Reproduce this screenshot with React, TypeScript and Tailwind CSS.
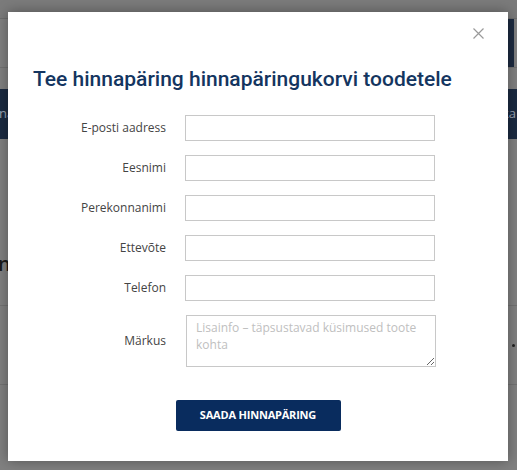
import React from "react";

const fields = ["E-posti aadress", "Eesnimi", "Perekonnanimi", "Ettevõte", "Telefon"];

export default function App() {
  return (
    <div
      className="relative w-[517px] h-[470px] overflow-hidden bg-[#808080]"
      style={{ fontFamily: '"Open Sans", "Noto Sans", sans-serif' }}
    >
      {/* background page (dimmed) */}
      <div className="flex flex-col">
        <div className="h-[19px] bg-[#7b7b7b] border-b border-[#6e6e6e]" />
        <div className="h-[49px] flex justify-end border-b border-[#727272]">
          <div className="w-[6px] mr-[3px] bg-[#1c2a40]" />
        </div>
        <div className="h-[21px]" />
        <div className="h-[50px] bg-[#1b2a41] flex items-center justify-between text-[#9aa4b3] text-[13px]">
          <span className="-ml-[1px]">na</span>
          <span className="mr-[1px]">ka</span>
        </div>
        <div className="h-[113px]" />
        <div className="h-[24px] flex items-center text-[#1a1a1a] text-[20px] font-semibold">
          <span className="-ml-[2px]">n</span>
        </div>
        <div className="h-[30px] border-b border-[#727272]" />
        <div className="h-[79px] border-b border-[#727272] flex items-center justify-end">
          <span className="w-[3px] h-[3px] rounded-full bg-[#222] mr-[2px]" />
        </div>
      </div>

      {/* modal */}
      <div className="absolute left-[8px] top-[12px] w-[500px] h-[449px] bg-white shadow-[0_0_12px_rgba(0,0,0,0.35)]">
        <button className="absolute top-[14px] right-[23px] w-[14px] h-[14px] flex items-center justify-center text-[#9a9a9a]">
          <svg width="11" height="11" viewBox="0 0 11 11" fill="none" stroke="currentColor" strokeWidth="1.2">
            <path d="M0.5 0.5 L10.5 10.5 M10.5 0.5 L0.5 10.5" />
          </svg>
        </button>
        <div className="pt-[53px] px-[25px]">
          <h2
            className="whitespace-nowrap text-[21px] leading-[28px] font-medium text-[#143560]"
            style={{ fontFamily: 'Roboto, "Noto Sans", sans-serif' }}
          >
            Tee hinnapäring hinnapäringukorvi toodetele
          </h2>
        </div>
        <form className="mt-[22px] flex flex-col gap-[14px]">
          {fields.map((f) => (
            <div key={f} className="flex items-center">
              <label className="w-[158px] text-right text-[12px] text-[#444]">{f}</label>
              <input className="ml-[19px] w-[250px] h-[26px] border border-[#c8c8c8] bg-white outline-none" />
            </div>
          ))}
          <div className="flex items-center">
            <label className="w-[158px] text-right text-[12px] text-[#444]">Märkus</label>
            <textarea
              className="ml-[20px] w-[250px] h-[52px] border border-[#c8c8c8] px-[9px] py-[3px] text-[12px] leading-[17px] text-[#444] placeholder:text-[#c0c0c0] outline-none"
              placeholder="Lisainfo – täpsustavad küsimused toote kohta"
            />
          </div>
          <div className="flex justify-center mt-[19px]">
            <button
              type="button"
              className="w-[165px] h-[31px] bg-[#092c5e] text-white text-[11px] font-bold rounded-[2px] tracking-[-0.2px]"
            >
              SAADA HINNAPÄRING
            </button>
          </div>
        </form>
      </div>
    </div>
  );
}
